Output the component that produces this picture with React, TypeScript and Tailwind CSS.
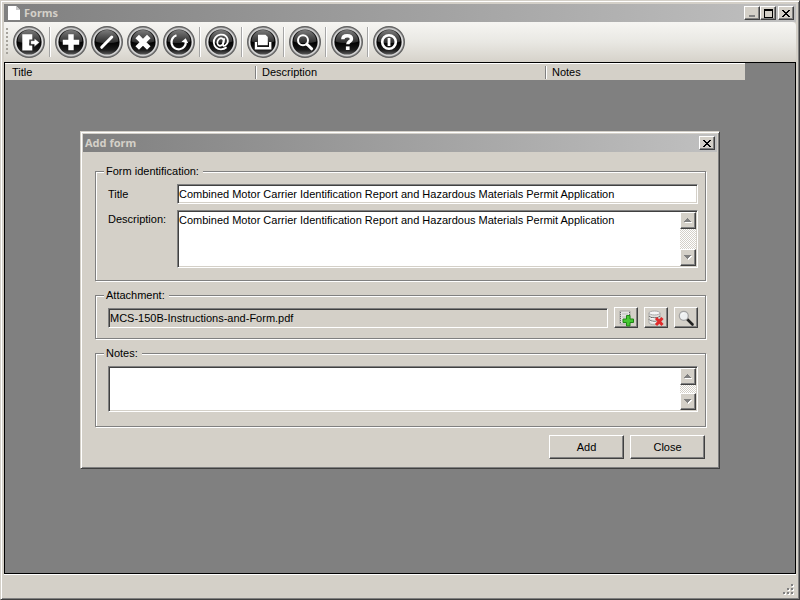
import { useState } from 'react';
import type { ReactNode } from 'react';

const RAISED = 'bg-[#d4d0c8] border border-t-white border-l-white border-r-[#404040] border-b-[#404040] shadow-[inset_-1px_-1px_0_#808080]';
const SUNKEN = 'border border-t-[#808080] border-l-[#808080] border-r-white border-b-white shadow-[inset_1px_1px_0_#404040,inset_-1px_-1px_0_#d4d0c8]';
const TITLE_BAR = 'flex items-center bg-linear-to-r from-[#808080] to-[#c0c0c0] text-[#d4d0c8] text-[11px] font-bold font-[Noto_Sans,sans-serif]';

const TOOLS: { label: string; icon: ReactNode; sep?: boolean }[] = [
  {
    label: 'Exit',
    sep: true,
    icon: (
      <>
        <path d="M9.3 8.2h10v5.3h-3v6h3v5h-10z" fill="#fff" />
        <path d="M17.6 14.6h3.6V12l5.3 4.5-5.3 4.5v-2.6h-3.6z" fill="#fff" stroke="#222" strokeWidth="0.6" />
      </>
    ),
  },
  { label: 'Add', icon: <path d="M13.3 8.3h5.4v5.5h5.5v4.9h-5.5v5.5h-5.4v-5.5H7.8v-4.9h5.5z" fill="#fff" /> },
  { label: 'Edit', icon: <path d="M10.7 21.3 20.8 11" stroke="#fff" strokeWidth="3" strokeLinecap="round" /> },
  { label: 'Delete', icon: <path d="m10.2 10.4 11.6 11.6m0-11.6L10.2 22" stroke="#fff" strokeWidth="5" /> },
  {
    label: 'Refresh',
    icon: (
      <>
        <path d="M13.5 9.3a7.2 7.2 0 1 0 9.3 6.2" stroke="#fff" strokeWidth="2.2" fill="none" />
        <path d="m18.5 15.8 4.2-3.6 2.6 5z" fill="#fff" />
      </>
    ),
    sep: true,
  },
  {
    label: 'Email',
    icon: (
      <g fill="none" stroke="#fff" strokeWidth="1.8">
        <ellipse cx="15.5" cy="16" rx="3" ry="3.8" transform="rotate(20 15.5 16)" />
        <path d="M19.3 12.2 18 18.2c-.3 1.8 1 2.1 2.2 1.2 1.8-1.2 3.2-3.8 2.3-6.6-1.1-3.2-4.2-4.5-7.2-4.1-4 .5-6.8 4-6.5 8 .3 4 3.4 6.7 7.2 6.6 2.2 0 4-.7 5.6-2" />
      </g>
    ),
    sep: true,
  },
  {
    label: 'Print',
    icon: (
      <>
        <path d="M11 8.8h7.5l2.3 2.3v8.2H11z" fill="#fff" />
        <path d="M9 16v6.2h14.2V16" stroke="#fff" strokeWidth="2.4" fill="none" />
        <path d="M10.5 20.2h11.2" stroke="#222" strokeWidth="0.8" />
      </>
    ),
    sep: true,
  },
  {
    label: 'Find',
    icon: (
      <>
        <circle cx="14" cy="14.2" r="5" stroke="#fff" strokeWidth="2" fill="none" />
        <path d="m18 18.2 4.6 4.6" stroke="#fff" strokeWidth="3" strokeLinecap="round" />
      </>
    ),
    sep: true,
  },
  {
    label: 'Help',
    icon: (
      <>
        <path d="M11.8 13.3c0-2.4 1.7-3.5 4.3-3.5s4.4 1 4.4 3.1c0 2.4-3.7 2.6-3.7 5.3" stroke="#fff" strokeWidth="3.4" fill="none" />
        <path d="M14.9 20.4h3.7V24h-3.7z" fill="#fff" />
      </>
    ),
    sep: true,
  },
  {
    label: 'Close forms',
    icon: (
      <>
        <circle cx="16" cy="16" r="6.8" stroke="#fff" strokeWidth="2.6" fill="none" />
        <path d="M16 12v8" stroke="#fff" strokeWidth="2.8" />
      </>
    ),
  },
];

function RoundIcon({ children }: { children: ReactNode }) {
  return (
    <svg width="32" height="32" viewBox="0 0 32 32" aria-hidden="true">
      <circle cx="16" cy="16" r="15.4" fill="#8e8e8e" stroke="#636363" strokeWidth="1.2" />
      <circle cx="16" cy="16" r="13.4" fill="url(#face)" stroke="url(#rim)" strokeWidth="1.6" />
      <path d="M4.6 15.5a11.4 11.4 0 0 1 22.8 0c-5 2-17.8 2-22.8 0z" fill="url(#gloss)" />
      {children}
    </svg>
  );
}

function CloseGlyph() {
  return (
    <svg width="8" height="7" viewBox="0 0 8 7" shapeRendering="crispEdges" aria-hidden="true">
      <path d="M0 0h2v1h1v1h2V1h1V0h2v1H7v1H6v1H5v1h1v1h1v1h1v1H6V6H5V5H3v1H2v1H0V6h1V5h1V4h1V3H2V2H1V1H0z" fill="#000" />
    </svg>
  );
}

function CaptionButton({ label, children, onClick }: { label: string; children: ReactNode; onClick?: () => void }) {
  return (
    <button type="button" aria-label={label} onClick={onClick} className={`${RAISED} flex h-[14px] w-4 items-center justify-center`}>
      {children}
    </button>
  );
}

function ScrollButton({ label, down }: { label: string; down?: boolean }) {
  return (
    <button type="button" aria-label={label} className={`${RAISED} flex h-[17px] w-4 items-center justify-center`}>
      <svg width="8" height="5" viewBox="0 0 8 5" shapeRendering="crispEdges" aria-hidden="true">
        {down ? (
          <>
            <path d="M1 1h7L4.5 5z" fill="#fff" />
            <path d="M0 0h7L3.5 4z" fill="#808080" />
          </>
        ) : (
          <>
            <path d="M1 4h7v1H1z" fill="#fff" />
            <path d="M0 4h7L3.5 0z" fill="#808080" />
          </>
        )}
      </svg>
    </button>
  );
}

interface MemoProps {
  id: string;
  label?: string;
  value: string;
  onChange: (v: string) => void;
  className: string;
}

function Memo({ id, label, value, onChange, className }: MemoProps) {
  return (
    <div className={`${SUNKEN} flex flex-1 bg-white p-px ${className}`}>
      <textarea
        id={id}
        aria-label={label}
        value={value}
        onChange={(e) => onChange(e.target.value)}
        className="min-w-0 flex-1 resize-none overflow-hidden bg-transparent py-0.5 leading-[13px] outline-none"
      />
      <div className="flex flex-col justify-between bg-[repeating-conic-gradient(#fff_0_25%,#d4d0c8_0_50%)] bg-size-[2px_2px]">
        <ScrollButton label="Scroll up" />
        <ScrollButton label="Scroll down" down />
      </div>
    </div>
  );
}

function Group({ title, className, children }: { title: string; className: string; children: ReactNode }) {
  return (
    <fieldset className={`border border-[#808080] pr-[7px] pl-3 shadow-[1px_1px_0_#fff,inset_1px_1px_0_#fff] ${className}`}>
      <legend className="-ml-1 bg-[#d4d0c8] pr-1 pl-0.5 leading-[13px]">{title}</legend>
      {children}
    </fieldset>
  );
}

function SmallButton({ label, children }: { label: string; children: ReactNode }) {
  return (
    <button type="button" aria-label={label} className={`${RAISED} flex h-[21px] w-6 items-center justify-center`}>
      <svg width="18" height="18" viewBox="0 0 18 18" aria-hidden="true">{children}</svg>
    </button>
  );
}

function AddFormDialog({ onClose }: { onClose: () => void }) {
  const [title, setTitle] = useState('Combined Motor Carrier Identification Report and Hazardous Materials Permit Application');
  const [description, setDescription] = useState(title);
  const [notes, setNotes] = useState('');

  return (
    <div className="fixed inset-0 flex items-center justify-center">
      <div
        role="dialog"
        aria-label="Add form"
        className="w-4/5 border border-t-[#d4d0c8] border-r-[#404040] border-b-[#404040] border-l-[#d4d0c8] bg-[#d4d0c8] p-0.5 shadow-[inset_1px_1px_0_#fff,inset_-1px_-1px_0_#808080]"
      >
        <div className={`${TITLE_BAR} h-[18px] justify-between px-0.5`}>
          <h2 className="pb-0.5">Add form</h2>
          <CaptionButton label="Close dialog" onClick={onClose}><CloseGlyph /></CaptionButton>
        </div>
        <form className="pt-[13px] pr-[11px] pb-[7px] pl-3" onSubmit={(e) => e.preventDefault()}>
          <Group title="Form identification:" className="pb-3">
            <div className="mt-1.5 flex items-center">
              <label htmlFor="title" className="w-[69px]">Title</label>
              <input
                id="title"
                value={title}
                onChange={(e) => setTitle(e.target.value)}
                className={`${SUNKEN} h-5 min-w-0 flex-1 bg-white px-px outline-none`}
              />
            </div>
            <div className="mt-1.5 flex items-start">
              <label htmlFor="description" className="w-[69px] pt-[3px]">Description:</label>
              <Memo id="description" value={description} onChange={setDescription} className="h-[58px]" />
            </div>
          </Group>
          <Group title="Attachment:" className="mt-2 pb-2.5">
            <div className="mt-[5px] flex items-center gap-1.5">
              <input
                aria-label="Attachment file"
                readOnly
                value="MCS-150B-Instructions-and-Form.pdf"
                className={`${SUNKEN} h-5 min-w-0 flex-1 bg-[#d4d0c8] px-px outline-none`}
              />
              <SmallButton label="Add attachment">
                <path d="M3 2h10v13H3z" fill="#e4e4e2" stroke="#a5a5a2" />
                <path d="M3.5 3v12M12.5 3v6" stroke="#666" strokeDasharray="1 1" />
                <path d="M5 5h6M5 8h6" stroke="#bbb" />
                <path d="M9.5 6.5h3.5v3.5h3.5v3.5H13v3.5H9.5v-3.5H6V10h3.5z" fill="#45c832" stroke="#208716" />
              </SmallButton>
              <SmallButton label="Remove attachment">
                <path d="M2 4v9.5c0 3 11 3 11 0V4" fill="#e0e0de" stroke="#a8a8a6" />
                <ellipse cx="7.5" cy="4" rx="5.5" ry="2" fill="#f5f5f5" stroke="#aaa" />
                <path d="M2 7c1 2.5 10 2.5 11 0M2 10.5c1 2.5 10 2.5 11 0" fill="none" stroke="#555" />
                <path d="M2.5 8.3c2 2 8 2 10 0M2.5 11.8c2 2 8 2 10 0" fill="none" stroke="#fff" />
                <path d="m9 9 6.5 7M15.5 9 9 16" stroke="#e02a2a" strokeWidth="3" />
              </SmallButton>
              <SmallButton label="View attachment">
                <path d="m10 10 5.5 5.5" stroke="#222" strokeWidth="2.6" strokeLinecap="round" />
                <circle cx="6.8" cy="6.8" r="4.5" fill="#eef0f1" stroke="#a2a2a2" strokeWidth="1.2" />
                <path d="M4.5 6.2c.4-1.4 1.5-2 2.8-2" fill="none" stroke="#fff" />
              </SmallButton>
            </div>
          </Group>
          <Group title="Notes:" className="mt-2 pb-3.5">
            <div className="mt-1.5 flex">
              <Memo id="notes" label="Notes" value={notes} onChange={setNotes} className="h-[46px]" />
            </div>
          </Group>
          <div className="mt-2 flex justify-end gap-1.5 pr-px">
            <button type="submit" className={`${RAISED} h-6 w-[75px]`}>Add</button>
            <button type="button" onClick={onClose} className={`${RAISED} h-6 w-[75px]`}>Close</button>
          </div>
        </form>
      </div>
    </div>
  );
}

export default function App() {
  const [dialogOpen, setDialogOpen] = useState(true);

  return (
    <div className="flex min-h-screen flex-col border border-t-[#d4d0c8] border-r-[#404040] border-b-[#404040] border-l-[#d4d0c8] bg-[#d4d0c8] p-[3px] pb-0 font-[Liberation_Sans,Arial,sans-serif] text-[11px] leading-[13px] text-black shadow-[inset_1px_1px_0_#fff,inset_-1px_-1px_0_#808080]">
      <svg width="0" height="0" className="absolute" aria-hidden="true">
        <defs>
          <linearGradient id="rim" x1="0" y1="0" x2="0" y2="1">
            <stop offset="0" stopColor="#c4c4c4" />
            <stop offset="0.5" stopColor="#e6e6e6" />
            <stop offset="1" stopColor="#cfcfcf" />
          </linearGradient>
          <linearGradient id="face" x1="0" y1="0" x2="0" y2="1">
            <stop offset="0" stopColor="#333" />
            <stop offset="0.5" stopColor="#000" />
            <stop offset="0.8" stopColor="#1c1c1c" />
            <stop offset="1" stopColor="#666" />
          </linearGradient>
          <linearGradient id="gloss" x1="0" y1="0" x2="0" y2="1">
            <stop offset="0" stopColor="#7a7a7a" />
            <stop offset="1" stopColor="#2a2a2a" />
          </linearGradient>
        </defs>
      </svg>

      <header className={`${TITLE_BAR} h-[18px] pr-0.5 pl-1`}>
        <svg width="12" height="14" viewBox="0 0 12 14" className="mr-1" aria-hidden="true">
          <path d="M0 0h8l4 4v10H0z" fill="#fff" />
          <path d="M8 0v4h4z" fill="#c9c9c9" />
        </svg>
        <h1 className="flex-1 pb-0.5">Forms</h1>
        <CaptionButton label="Minimize">
          <svg width="8" height="8" viewBox="0 0 8 8" aria-hidden="true">
            <path d="M1 6h6v2H1z" fill="#808080" />
          </svg>
        </CaptionButton>
        <CaptionButton label="Maximize">
          <svg width="9" height="9" viewBox="0 0 9 9" shapeRendering="crispEdges" aria-hidden="true">
            <path d="M0 0h9v9H0zM1 2v6h7V2z" fill="#000" fillRule="evenodd" />
          </svg>
        </CaptionButton>
        <div className="ml-0.5 flex">
          <CaptionButton label="Close window"><CloseGlyph /></CaptionButton>
        </div>
      </header>

      <nav aria-label="Forms toolbar" className="flex h-10 items-center rounded-r-sm bg-linear-to-b from-[#f6f5f2] via-[#e9e8e3] to-[#d6d2ca]">
        <div className="mx-0.5 h-7 w-[3px] bg-[linear-gradient(#a5a29b_2px,transparent_2px)] bg-size-[2px_4px] bg-repeat-y" />
        {TOOLS.map((t) => (
          <div key={t.label} className="flex items-center">
            <button type="button" aria-label={t.label} className="flex w-9 justify-center">
              <RoundIcon>{t.icon}</RoundIcon>
            </button>
            {t.sep && <div className="mx-0.5 h-[30px] w-0.5 border-r border-l border-l-[#a6a6a6] border-r-white" />}
          </div>
        ))}
      </nav>

      <main className="flex-1 border border-black bg-[#808080]">
        <table className="w-[740px] max-w-full table-fixed border-collapse bg-[#d4d0c8] text-left">
          <thead>
            <tr className="h-4 border-t border-white">
              <th className="w-[251px] pt-0.5 font-normal">
                <div className="border-r border-[#808080] pl-[7px]">Title</div>
              </th>
              <th className="w-[290px] pt-0.5 font-normal">
                <div className="border-r border-l border-r-[#808080] border-l-white pl-[5px]">Description</div>
              </th>
              <th className="pt-0.5 font-normal">
                <div className="border-l border-white pl-[5px]">Notes</div>
              </th>
            </tr>
          </thead>
        </table>
      </main>

      <footer className="flex h-[25px] items-end justify-end border-t border-white pr-0.5 pb-1">
        <svg width="12" height="12" viewBox="0 0 12 12" shapeRendering="crispEdges" aria-hidden="true">
          <path d="M10 2h2v2h-2zM6 6h2v2H6zM10 6h2v2h-2zM2 10h2v2H2zM6 10h2v2H6zM10 10h2v2h-2z" fill="#fff" />
          <path d="M9 1h2v2H9zM5 5h2v2H5zM9 5h2v2H9zM1 9h2v2H1zM5 9h2v2H5zM9 9h2v2H9z" fill="#808080" />
        </svg>
      </footer>

      {dialogOpen && <AddFormDialog onClose={() => setDialogOpen(false)} />}
    </div>
  );
}
